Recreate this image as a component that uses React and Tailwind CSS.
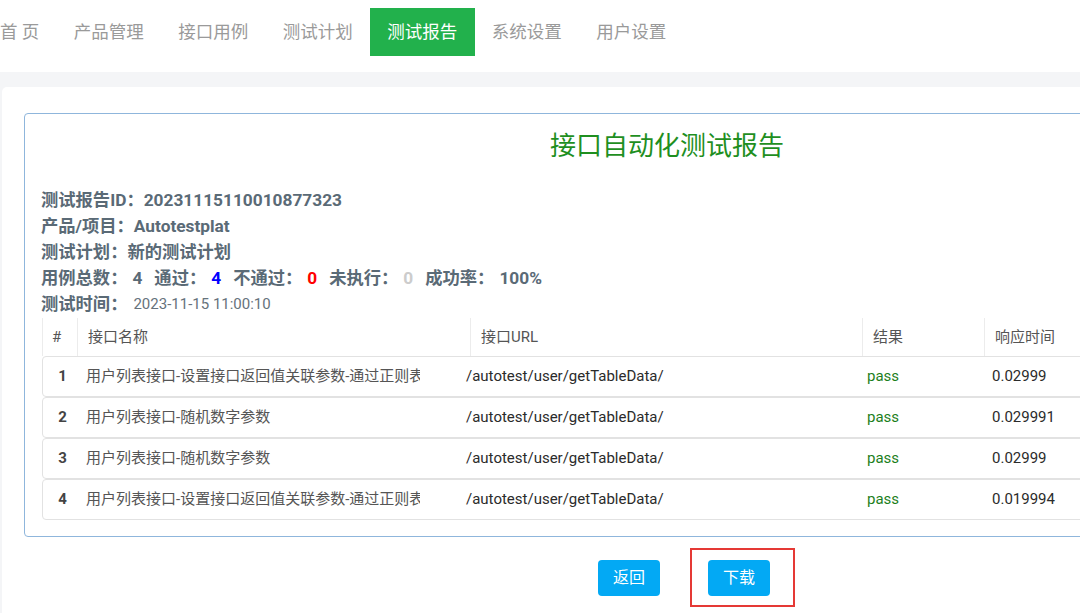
import React from "react";

const navItems = ["首 页", "产品管理", "接口用例", "测试计划", "测试报告", "系统设置", "用户设置"];

const rows = [
  { no: 1, name: "用户列表接口-设置接口返回值关联参数-通过正则表达式提取", url: "/autotest/user/getTableData/", result: "pass", time: "0.02999" },
  { no: 2, name: "用户列表接口-随机数字参数", url: "/autotest/user/getTableData/", result: "pass", time: "0.029991" },
  { no: 3, name: "用户列表接口-随机数字参数", url: "/autotest/user/getTableData/", result: "pass", time: "0.02999" },
  { no: 4, name: "用户列表接口-设置接口返回值关联参数-通过正则表达式提取", url: "/autotest/user/getTableData/", result: "pass", time: "0.019994" },
];

const font = { fontFamily: "Roboto, 'Noto Sans CJK SC', sans-serif" };

const NavBar = () => (
  <div className="h-[72px] bg-white flex items-center">
    <div className="flex -ml-[17.25px] h-[48px] -mt-[8px]">
      {navItems.map((item) => (
        <div
          key={item}
          className={
            item === "测试报告"
              ? "px-[17.25px] flex items-center bg-[#22b14c] text-white text-[17.5px] whitespace-pre"
              : "px-[17.25px] flex items-center text-[#9a9a9a] text-[17.5px] whitespace-pre"
          }
        >
          {item}
        </div>
      ))}
    </div>
  </div>
);

const InfoLines = () => (
  <div className="mt-[23px] text-[#5a6a76] text-[17.3px] font-bold">
    <div className="h-[26px] leading-[26px]">测试报告ID：20231115110010877323</div>
    <div className="h-[26px] leading-[26px]">产品/项目：Autotestplat</div>
    <div className="h-[26px] leading-[26px]">测试计划：新的测试计划</div>
    <div className="h-[26px] leading-[26px] flex">
      <span>用例总数：</span>
      <span className="ml-[5px]">4</span>
      <span className="ml-[12px]">通过：</span>
      <span className="ml-[5px] text-[#0000ff]">4</span>
      <span className="ml-[12px]">不通过：</span>
      <span className="ml-[5px] text-[#ff0000]">0</span>
      <span className="ml-[12px]">未执行：</span>
      <span className="ml-[5px] text-[#cccccc]">0</span>
      <span className="ml-[12px]">成功率：</span>
      <span className="ml-[5px]">100%</span>
    </div>
    <div className="h-[26px] leading-[26px] flex">
      <span>测试时间：</span>
      <span className="ml-[6px] font-normal text-[15px] text-[#66727c]">2023-11-15 11:00:10</span>
    </div>
  </div>
);

const ResultTable = () => (
  <div className="mt-[1px] ml-[1px] w-[1235px]">
    <div className="h-[38px] flex text-[15px] text-[#555]">
      <div className="w-[35px] pl-[9px] flex items-center border-l border-[#ececec]">#</div>
      <div className="w-[393px] pl-[10px] flex items-center border-l border-[#ececec]">接口名称</div>
      <div className="w-[392px] pl-[10px] flex items-center border-l border-[#ececec]">接口URL</div>
      <div className="w-[122px] pl-[10px] flex items-center border-l border-[#ececec]">结果</div>
      <div className="flex-1 pl-[10px] flex items-center border-l border-[#ececec]">响应时间</div>
    </div>
    {rows.map((row) => (
      <div
        key={row.no}
        className="h-[41px] flex items-center border border-[#e2e2e2] rounded-[4px] text-[15px]"
      >
        <div className="w-[39px] text-center font-bold text-[#444]">{row.no}</div>
        <div className="w-[380px] pl-[4px]">
          <div className="w-[334px] overflow-hidden whitespace-nowrap text-[#555]">{row.name}</div>
        </div>
        <div className="w-[401px] pl-[4px] text-[#2b2b2b]">{row.url}</div>
        <div className="w-[125px] pl-[4px] text-[#1d7f1d]">{row.result}</div>
        <div className="flex-1 pl-[4px] text-[#2b2b2b]">{row.time}</div>
      </div>
    ))}
  </div>
);

export default function App() {
  return (
    <div className="w-[1080px] h-[613px] overflow-hidden bg-[#f4f5f7]" style={font}>
      <NavBar />
      <div className="mt-[15px] ml-[2px] w-[1330px] h-[600px] bg-white rounded-tl-[5px] pt-[26px] pl-[22px]">
        <div className="w-[1270px] border border-[#8fb6dc] rounded-[4px] pt-[14px] pl-[16px] pb-[16px]">
          <div className="h-[36px] leading-[36px] text-center text-[26px] text-[#1f8f1f]">接口自动化测试报告</div>
          <InfoLines />
          <ResultTable />
        </div>
        <div className="mt-[11px] flex items-center">
          <button className="ml-[574px] w-[62px] h-[36px] rounded-[4px] bg-[#03a9f4] text-white text-[16px]">
            返回
          </button>
          <div className="ml-[30px] border-2 border-[#e53935] pl-[16px] pr-[23px] pt-[10px] pb-[9px]">
            <button className="w-[62px] h-[36px] rounded-[4px] bg-[#03a9f4] text-white text-[16px] block">
              下载
            </button>
          </div>
        </div>
      </div>
    </div>
  );
}
